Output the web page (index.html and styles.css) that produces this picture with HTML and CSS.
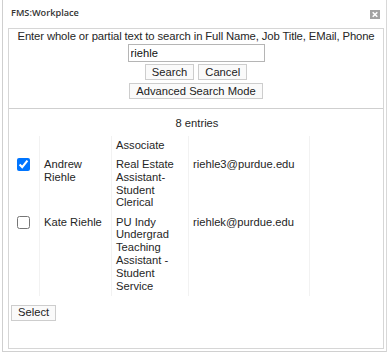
FILE: index.html
```html
<!DOCTYPE html>
<html>
<head>
<meta charset="utf-8">
<link rel="stylesheet" href="styles.css">
</head>
<body>
<div class="dialog">
  <div class="titlebar">
    <span class="title">FMS:Workplace</span>
    <span class="close">
      <svg width="10" height="9" viewBox="0 0 10 9"><rect x="0" y="0" width="10" height="9" fill="#a3a3a3"/><path d="M2.7 2.2 L7.3 6.8 M7.3 2.2 L2.7 6.8" stroke="#fff" stroke-width="1.6"/></svg>
    </span>
  </div>
  <div class="content">
    <div class="search">
      <div class="prompt">Enter whole or partial text to search in Full Name, Job Title, EMail, Phone</div>
      <input class="query" type="text" value="riehle">
      <div class="btnrow">
        <button class="btn">Search</button>
        <button class="btn">Cancel</button>
      </div>
      <div class="btnrow adv">
        <button class="btn">Advanced Search Mode</button>
      </div>
    </div>
    <div class="results">
      <div class="count">8 entries</div>
      <table class="list">
        <tr>
          <td class="c-check"></td>
          <td class="c-name"></td>
          <td class="c-job">Associate</td>
          <td class="c-mail"></td>
          <td class="c-rest"></td>
        </tr>
        <tr>
          <td class="c-check"><input type="checkbox" checked></td>
          <td class="c-name">Andrew Riehle</td>
          <td class="c-job">Real Estate Assistant-Student Clerical</td>
          <td class="c-mail">riehle3@purdue.edu</td>
          <td class="c-rest"></td>
        </tr>
        <tr>
          <td class="c-check"><input type="checkbox"></td>
          <td class="c-name">Kate Riehle</td>
          <td class="c-job">PU Indy Undergrad Teaching Assistant - Student Service</td>
          <td class="c-mail">riehlek@purdue.edu</td>
          <td class="c-rest"></td>
        </tr>
      </table>
      <button class="btn select">Select</button>
    </div>
  </div>
</div>
</body>
</html>
```

FILE: styles.css
```css
html, body {
  margin: 0;
  padding: 0;
  background: #ffffff;
}
body {
  font-family: "Liberation Sans", Arial, sans-serif;
  font-size: 11.2px;
  color: #262626;
  width: 389px;
  height: 356px;
  overflow: hidden;
}
.dialog {
  margin-left: 2px;
  width: 383px;
  height: 351px;
  border-left: 1px solid #cfcfcf;
  border-right: 1px solid #d8d8d8;
  border-bottom: 1px solid #d0d0d0;
  display: flex;
  flex-direction: column;
}
.titlebar {
  height: 28px;
  display: flex;
  align-items: center;
  justify-content: space-between;
  padding: 0 6px 0 8px;
  box-sizing: border-box;
}
.title {
  font-family: "Open Sans", sans-serif;
  font-weight: 600;
  font-size: 9.2px;
  color: #333;
  margin-top: -3px;
}
.close {
  display: flex;
  margin-top: 1px;
}
.content {
  margin: 0 2px 2px 5px;
  border: 1px solid #d6d6d6;
  flex: 1;
  display: flex;
  flex-direction: column;
}
.search {
  display: flex;
  flex-direction: column;
  align-items: center;
  padding: 1px 0 9px;
  border-bottom: 1px solid #cfcfcf;
}
.prompt {
  line-height: 13px;
  font-size: 11.3px;
  letter-spacing: -0.12px;
  white-space: nowrap;
}
.query {
  margin-top: 1px;
  width: 137px;
  height: 18px;
  box-sizing: border-box;
  border: 1px solid #b5b5b5;
  padding: 0 2px;
  font-family: "Liberation Sans", Arial, sans-serif;
  font-size: 11.2px;
  color: #111;
  outline: none;
}
.btnrow {
  display: flex;
  gap: 4px;
  margin-top: 2px;
}
.btnrow.adv {
  margin-top: 3px;
}
.btn {
  font-family: "Liberation Sans", Arial, sans-serif;
  font-size: 11.2px;
  color: #222;
  background: #fafafa;
  border: 1px solid #cdcdcd;
  border-radius: 0;
  height: 16px;
  line-height: 13px;
  padding: 0 6px;
  margin: 0;
}
.results {
  display: flex;
  flex-direction: column;
  padding: 0 0 0 2px;
}
.count {
  text-align: center;
  line-height: 12.8px;
  padding: 8px 0 6px;
}
.list {
  border-collapse: separate;
  border-spacing: 0;
  table-layout: fixed;
  line-height: 12.8px;
  width: 331px;
}
.list td {
  vertical-align: top;
  border-left: 1px solid #f2f2f2;
  padding: 3px 6px 3.4px 4px;
}
.list td:first-child {
  border-left: none;
}
.list td.c-check {
  width: 28px;
  padding: 0;
}
.c-check input {
  display: block;
  margin: 3px 0 0 6px;
  width: 13px;
  height: 13px;
}
.c-name {
  width: 61px;
}
.c-job {
  width: 66px;
}
.c-mail {
  width: 110px;
}
.c-rest {
  width: 50px;
}
.select {
  align-self: flex-start;
  margin: 9px 0 0 0;
  height: 16px;
  padding: 0 6px;
}
```
